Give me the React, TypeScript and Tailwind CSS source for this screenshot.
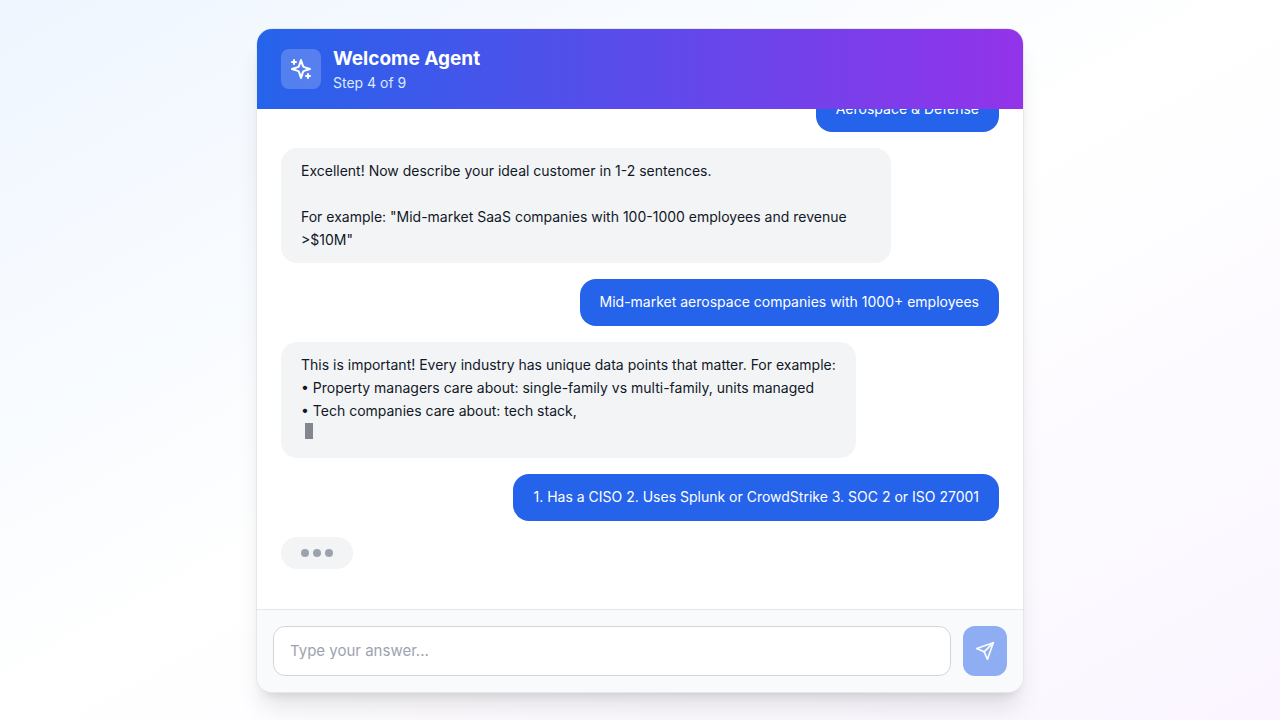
import { useLayoutEffect, useRef, useState } from "react";
import type { ReactNode } from "react";

type Message = {
  id: number;
  from: "agent" | "user";
  text: string;
  streaming?: boolean;
};

const messages: Message[] = [
  { id: 1, from: "user", text: "Aerospace & Defense" },
  {
    id: 2,
    from: "agent",
    text: 'Excellent! Now describe your ideal customer in 1-2 sentences.\n\nFor example: "Mid-market SaaS companies with 100-1000 employees and revenue >$10M"',
  },
  { id: 3, from: "user", text: "Mid-market aerospace companies with 1000+ employees" },
  {
    id: 4,
    from: "agent",
    text: "This is important! Every industry has unique data points that matter. For example:\n• Property managers care about: single-family vs multi-family, units managed\n• Tech companies care about: tech stack,\n",
    streaming: true,
  },
  { id: 5, from: "user", text: "1. Has a CISO 2. Uses Splunk or CrowdStrike 3. SOC 2 or ISO 27001" },
];

function StrokeIcon({ className, children }: { className: string; children: ReactNode }) {
  return (
    <svg
      className={className}
      viewBox="0 0 24 24"
      fill="none"
      stroke="currentColor"
      strokeWidth="2"
      strokeLinecap="round"
      strokeLinejoin="round"
      aria-hidden="true"
    >
      {children}
    </svg>
  );
}

function SparklesIcon() {
  return (
    <StrokeIcon className="size-6">
      <path d="m12 3-1.912 5.813a2 2 0 0 1-1.275 1.275L3 12l5.813 1.912a2 2 0 0 1 1.275 1.275L12 21l1.912-5.813a2 2 0 0 1 1.275-1.275L21 12l-5.813-1.912a2 2 0 0 1-1.275-1.275L12 3Z" />
      <path d="M5 3v4" />
      <path d="M19 17v4" />
      <path d="M3 5h4" />
      <path d="M17 19h4" />
    </StrokeIcon>
  );
}

function SendIcon() {
  return (
    <StrokeIcon className="size-5">
      <path d="m22 2-7 20-4-9-9-4Z" />
      <path d="M22 2 11 13" />
    </StrokeIcon>
  );
}

function Bubble({ message }: { message: Message }) {
  const isUser = message.from === "user";
  return (
    <div className={isUser ? "flex justify-end" : "flex justify-start"}>
      <div
        className={
          isUser
            ? "max-w-[85%] rounded-2xl bg-[#2563eb] px-5 py-3 text-white"
            : "max-w-[85%] rounded-2xl bg-[#f3f4f6] px-5 py-3 text-[#111827]"
        }
      >
        <p className="text-sm leading-relaxed whitespace-pre-wrap">
          {message.text}
          {message.streaming && <span className="mt-px ml-1 inline-block h-4 w-2 bg-[#111827] opacity-50" />}
        </p>
      </div>
    </div>
  );
}

function TypingIndicator() {
  return (
    <div className="flex justify-start">
      <div className="flex gap-1 rounded-2xl bg-[#f3f4f6] px-5 py-3">
        <span className="size-2 rounded-full bg-[#9ca3af]" />
        <span className="size-2 rounded-full bg-[#9ca3af]" />
        <span className="size-2 rounded-full bg-[#9ca3af]" />
      </div>
    </div>
  );
}

export default function App() {
  const [answer, setAnswer] = useState("");
  const listRef = useRef<HTMLDivElement>(null);

  useLayoutEffect(() => {
    const list = listRef.current;
    if (list) list.scrollTop = list.scrollHeight;
  }, []);

  return (
    <main className="flex min-h-screen items-center justify-center bg-linear-to-br/srgb from-[#eff6ff] via-white to-[#faf5ff] px-4 font-['Inter',sans-serif] antialiased">
      <section className="w-full max-w-3xl overflow-hidden rounded-2xl border border-[#e5e7eb] bg-white shadow-xl">
        <header className="flex items-center gap-3 bg-linear-to-r/srgb from-[#2563eb] to-[#9333ea] px-6 py-4 text-white">
          <div className="rounded-lg bg-white/20 p-2">
            <SparklesIcon />
          </div>
          <div>
            <h1 className="text-[19px] leading-7 font-bold">Welcome Agent</h1>
            <p className="text-sm text-[#dbeafe]">Step 4 of 9</p>
          </div>
        </header>

        <div ref={listRef} className="h-[500px] space-y-4 overflow-y-auto p-6 [scrollbar-width:none]">
          {messages.map((message) => (
            <Bubble key={message.id} message={message} />
          ))}
          <TypingIndicator />
          <div />
        </div>

        <form
          className="flex gap-3 border-t border-[#e5e7eb] bg-[#f9fafb] p-4"
          onSubmit={(event) => event.preventDefault()}
        >
          <input
            type="text"
            aria-label="Type your answer"
            placeholder="Type your answer..."
            value={answer}
            onChange={(event) => setAnswer(event.target.value)}
            className="min-w-0 flex-1 rounded-xl border border-[#d1d5db] bg-white px-4 py-3 text-[15px] leading-6 text-[#111827] outline-none placeholder:text-[#9ca3af] focus:border-[#2563eb]"
          />
          <button
            type="submit"
            aria-label="Send"
            disabled={!answer.trim()}
            className="rounded-xl bg-[#2563eb] px-3 text-white disabled:opacity-50"
          >
            <SendIcon />
          </button>
        </form>
      </section>
    </main>
  );
}
